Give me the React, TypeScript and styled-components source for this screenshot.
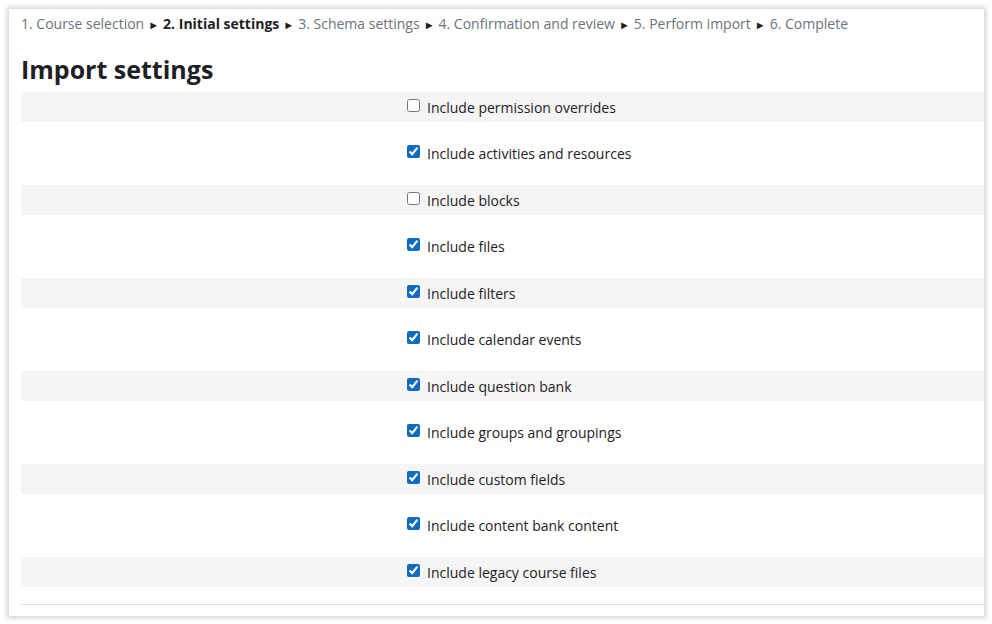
import React from "react";
import styled, { createGlobalStyle } from "styled-components";

const Global = createGlobalStyle`
  body { margin: 0; background: #fff; font-family: "Open Sans", "Noto Sans", sans-serif; color: #1d2125; }
`;
const Card = styled.div`
  margin: 9px 8px 8px 9px;
  height: 607px;
  box-sizing: border-box;
  padding: 3px 0 0 12px;
  background: #fff;
  box-shadow: 0 0 5px 2px rgba(0,0,0,0.18);
`;
const Crumbs = styled.div`
  font-size: 14px;
  color: #6a737b;
  line-height: 24px;
  white-space: nowrap;
`;
const Current = styled.span`
  color: #1d2125;
  font-weight: 700;
`;
const Arrow = styled.span`
  color: #1d2125;
  font-size: 11px;
  margin: 0 4px;
`;
const Title = styled.h2`
  margin: 17px 0 8px;
  font-size: 25px;
  font-weight: 700;
  line-height: 30px;
`;
const Row = styled.div<{ $odd: boolean }>`
  height: 30px;
  margin-bottom: 16.5px;
  display: flex;
  align-items: center;
  padding-left: 386px;
  background: ${p => (p.$odd ? "#f5f5f5" : "transparent")};
  font-size: 14px;
  color: #1d2125;
`;
const Box = styled.input`
  width: 13px;
  height: 13px;
  margin: 0 7px 0 0;
  accent-color: #0f6cbf;
  transform: translateY(-2px);
`;
const Rule = styled.hr`
  border: 0;
  border-top: 1px solid #dee2e6;
  margin: 0;
`;
const items: [string, boolean][] = [
  ["Include permission overrides", false],
  ["Include activities and resources", true],
  ["Include blocks", false],
  ["Include files", true],
  ["Include filters", true],
  ["Include calendar events", true],
  ["Include question bank", true],
  ["Include groups and groupings", true],
  ["Include custom fields", true],
  ["Include content bank content", true],
  ["Include legacy course files", true],
];
const steps = ["1. Course selection", "2. Initial settings", "3. Schema settings", "4. Confirmation and review", "5. Perform import", "6. Complete"];
export default function App() {
  return (
    <>
      <Global />
      <Card>
        <Crumbs>
          {steps.map((s, i) => (
            <React.Fragment key={s}>
              {i > 0 && <Arrow>►</Arrow>}
              {i === 1 ? <Current>{s}</Current> : s}
            </React.Fragment>
          ))}
        </Crumbs>
        <Title>Import settings</Title>
        {items.map(([l, c], i) => (
          <Row key={l} $odd={i % 2 === 0}>
            <Box type="checkbox" defaultChecked={c} />
            {l}
          </Row>
        ))}
        <Rule />
      </Card>
    </>
  );
}
